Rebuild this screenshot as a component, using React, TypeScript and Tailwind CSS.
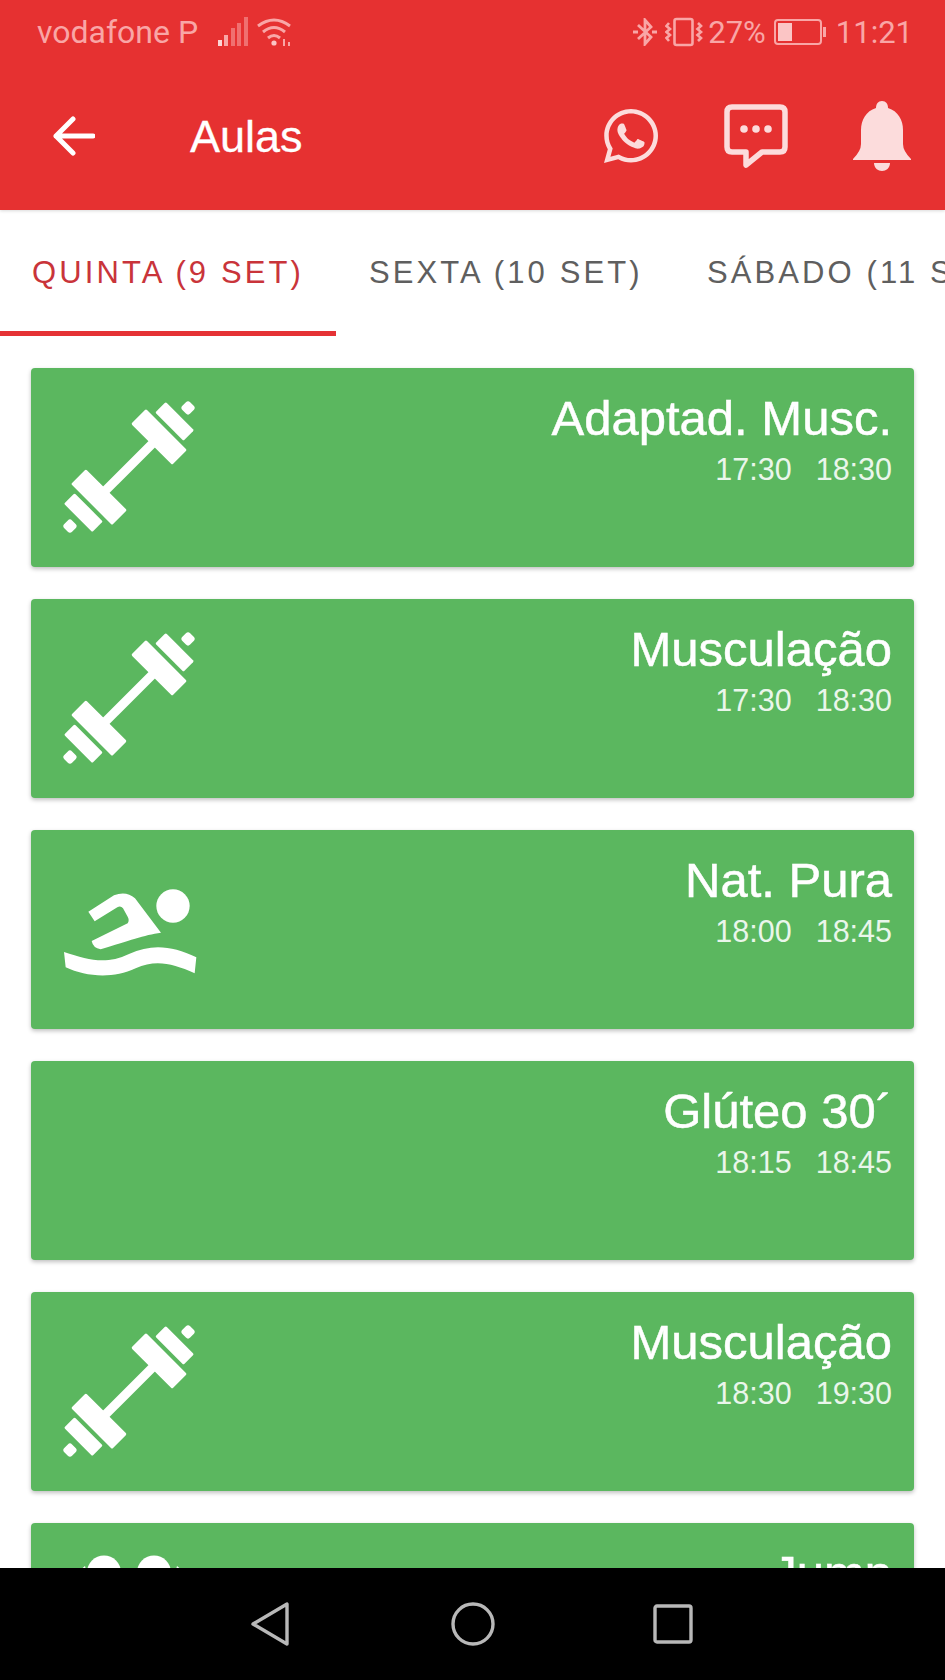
import React from 'react';
import { FaWhatsapp } from 'react-icons/fa';

interface Lesson {
    title: string;
    start: string;
    end: string;
    icon: 'gym' | 'swim' | 'jump' | null;
}

const lessons: Lesson[] = [
    { title: 'Adaptad. Musc.', start: '17:30', end: '18:30', icon: 'gym' },
    { title: 'Musculação', start: '17:30', end: '18:30', icon: 'gym' },
    { title: 'Nat. Pura', start: '18:00', end: '18:45', icon: 'swim' },
    { title: 'Glúteo 30´', start: '18:15', end: '18:45', icon: null },
    { title: 'Musculação', start: '18:30', end: '19:30', icon: 'gym' },
    { title: 'Jump', start: '18:30', end: '19:15', icon: 'jump' },
];

const GymIcon = () => (
    <svg viewBox="-70 -69 140 140" className="w-[140px] h-[140px]" fill="#fff">
        <g transform="rotate(-45)">
            <rect x="-40" y="-4.5" width="80" height="9" />
            <rect x="32" y="-29" width="21" height="58" rx="1.5" />
            <rect x="-53" y="-29" width="21" height="58" rx="1.5" />
            <rect x="57" y="-20" width="15" height="40" rx="1.5" />
            <rect x="-72" y="-20" width="15" height="40" rx="1.5" />
            <rect x="78" y="-5.5" width="11" height="11" rx="3" />
            <rect x="-89" y="-5.5" width="11" height="11" rx="3" />
        </g>
    </svg>
);

const SwimIcon = () => (
    <svg viewBox="90 0 420 420" className="w-[140px] h-[140px]" fill="#fff">
        <circle cx="432" cy="138" r="50" />
        <path d="M178 155 L255 106 Q292 92 318 115 L396 218 C345 225 300 242 215 268 Q192 264 188 243 L296 190 Q302 180 296 170 L282 145 Q275 136 265 142 L197 184 Z" />
        <path d="M105 276 C180 300 230 315 300 282 C370 250 430 258 502 292 L497 340 C430 310 380 298 320 325 C250 358 170 350 110 322 Z" />
    </svg>
);

const JumpIcon = () => (
    <svg viewBox="0 0 140 140" className="w-[140px] h-[140px]" fill="#fff">
        <circle cx="45" cy="19.5" r="17" />
        <circle cx="95" cy="19.5" r="17" />
        <path d="M20 18 L26 13 L30 30 L18 30 Z" />
        <path d="M114 30 L118 13 L124 18 L126 30 Z" />
    </svg>
);

const LessonCard = ({ lesson }: { lesson: Lesson }) => (
    <div className="relative flex h-[199px] shrink-0 items-center rounded-[4px] bg-[#5bb75f] pl-[28px] shadow-[0_2px_4px_rgba(0,0,0,0.25)]">
        {lesson.icon === 'gym' && <GymIcon />}
        {lesson.icon === 'swim' && <SwimIcon />}
        {lesson.icon === 'jump' && <JumpIcon />}
        <div className="absolute right-[22px] top-[22px] text-right">
            <div className="text-[49px] leading-[56px] text-white [-webkit-text-stroke:0.5px_white]">{lesson.title}</div>
            <div className="mt-[5px] flex justify-end gap-[24px] text-[30.5px] leading-[36px] text-[#eaf6eb]">
                <span>{lesson.start}</span>
                <span>{lesson.end}</span>
            </div>
        </div>
    </div>
);

const StatusBar = () => (
    <div className="flex h-[62px] items-center pl-[37px] pr-[32px] pt-[2px] font-['Roboto',sans-serif] text-[32px] text-[#f9a6a6]">
        <span>vodafone P</span>
        <svg viewBox="0 0 31 30" className="ml-[20px] h-[30px] w-[31px]">
            <rect x="0" y="23" width="4" height="6" fill="#fbd5d5" />
            <rect x="6" y="18" width="4" height="11" fill="#f9a6a6" />
            <rect x="13" y="11" width="4" height="18" fill="#f07070" />
            <rect x="19" y="6" width="4" height="23" fill="#f07070" />
            <rect x="26" y="0" width="4" height="29" fill="#f07070" />
        </svg>
        <svg viewBox="0 0 36 30" className="ml-[8px] h-[30px] w-[36px]" fill="none" stroke="#f9a6a6" strokeWidth="3">
            <path d="M1 9 Q17 -3 33 9" />
            <path d="M6 15 Q17 6 28 15" />
            <path d="M11 21 Q17 16 23 21" />
            <circle cx="17" cy="26" r="2.6" fill="#fbc5c5" stroke="none" />
            <path d="M27 29 V22 M32 29 V25" strokeWidth="2" />
        </svg>
        <svg viewBox="0 0 24 28" className="ml-auto h-[28px] w-[24px]" fill="none" stroke="#f9a6a6" strokeWidth="2.8">
            <path d="M5 7 L18 19 L12 26 V2 L18 9 L5 21" />
            <path d="M0 14 H5 M19 14 H24" />
        </svg>
        <svg viewBox="0 0 38 30" className="ml-[8px] h-[30px] w-[38px]" fill="none" stroke="#f9a6a6" strokeWidth="2.6">
            <rect x="9.5" y="2" width="18" height="26" rx="2" />
            <path d="M4 6 L1.5 9 L5 12 L1.5 15 L5 18 L1.5 21 L4 24" />
            <path d="M33 6 L36 9 L32.5 12 L36 15 L32.5 18 L36 21 L33 24" />
        </svg>
        <span className="ml-[5px] text-[31px] leading-none">27%</span>
        <svg viewBox="0 0 52 26" className="ml-[8px] h-[26px] w-[52px]">
            <rect x="1" y="1" width="46" height="24" rx="3" fill="none" stroke="#f9a6a6" strokeWidth="2" />
            <rect x="4" y="4" width="14" height="18" fill="#fbc5c5" />
            <rect x="49" y="8" width="3" height="10" fill="#f9a6a6" />
        </svg>
        <span className="ml-[10px] text-[31px] leading-none">11:21</span>
    </div>
);

const Toolbar = () => (
    <div className="flex h-[148px] items-center pl-[53px] pr-[34px]">
        <svg viewBox="0 0 42 40" className="h-[40px] w-[42px]" fill="none" stroke="#fff" strokeWidth="5" strokeLinecap="round" strokeLinejoin="round">
            <path d="M40 20 H3 M20 3 L3 20 L20 37" />
        </svg>
        <span className="ml-[95px] text-[45px] leading-none text-white [-webkit-text-stroke:0.3px_white]">Aulas</span>
        <FaWhatsapp className="ml-auto h-[62px] w-[54px] text-[#fcdcdc]" />
        <svg viewBox="0 0 64 64" className="ml-[66px] h-[64px] w-[64px]">
            <path d="M8 3 H56 Q61 3 61 8 V43 Q61 48 56 48 H38 L22 61 V48 H8 Q3 48 3 43 V8 Q3 3 8 3 Z" fill="none" stroke="#fcdcdc" strokeWidth="5.5" strokeLinejoin="round" />
            <circle cx="20" cy="25" r="3.8" fill="#fcdcdc" />
            <circle cx="32" cy="25" r="3.8" fill="#fcdcdc" />
            <circle cx="44" cy="25" r="3.8" fill="#fcdcdc" />
        </svg>
        <svg viewBox="0 0 58 70" className="ml-[65px] h-[70px] w-[58px]" fill="#fcdcdc">
            <path d="M29 0 C33 0 35 3 35 7 C45 10 50 19 50 29 V43 Q50 50 58 58 V59 H0 V58 Q8 50 8 43 V29 C8 19 13 10 23 7 C23 3 25 0 29 0 Z" />
            <path d="M21 62 H37 C37 67 33 70 29 70 C25 70 21 67 21 62 Z" />
        </svg>
    </div>
);

const Tabs = () => (
    <div className="flex h-[126px] shrink-0 overflow-hidden text-[31px] tracking-[3.1px] whitespace-nowrap">
        <div className="flex h-full w-[336px] shrink-0 items-center border-b-[5px] border-[#e53235] pl-[32px] pt-[6px] text-[#c9343a]">QUINTA (9 SET)</div>
        <div className="flex h-full w-[337px] shrink-0 items-center border-b-[5px] border-transparent pl-[33px] pt-[6px] text-[#5f5f5f]">SEXTA (10 SET)</div>
        <div className="flex h-full shrink-0 items-center border-b-[5px] border-transparent pl-[34px] pt-[6px] text-[#5f5f5f]">SÁBADO (11 SET)</div>
    </div>
);

const NavBar = () => (
    <div className="flex h-[112px] shrink-0 items-center bg-black">
        <svg viewBox="0 0 40 46" className="ml-[250px] h-[46px] w-[40px]" fill="none" stroke="#b8b8b8" strokeWidth="3.4" strokeLinejoin="round">
            <path d="M37 3 V43 L3 23 Z" />
        </svg>
        <svg viewBox="0 0 46 46" className="ml-[160px] h-[46px] w-[46px]" fill="none" stroke="#b8b8b8" strokeWidth="3.4">
            <circle cx="23" cy="23" r="20" />
        </svg>
        <svg viewBox="0 0 40 40" className="ml-[157px] h-[40px] w-[40px]" fill="none" stroke="#b8b8b8" strokeWidth="3.4">
            <rect x="2" y="2" width="36" height="36" rx="2" />
        </svg>
    </div>
);

const App: React.FC = () => {
    return (
        <div className="flex h-[1680px] w-[945px] flex-col overflow-hidden bg-white font-['Liberation_Sans',sans-serif]">
            <header className="relative z-10 h-[210px] shrink-0 bg-[#e63131] shadow-[0_1px_3px_rgba(0,0,0,0.15)]">
                <StatusBar />
                <Toolbar />
            </header>
            <Tabs />
            <main className="flex min-h-0 flex-1 flex-col gap-[32px] overflow-hidden px-[31px] pt-[32px]">
                {lessons.map((lesson, i) => (
                    <LessonCard key={i} lesson={lesson} />
                ))}
            </main>
            <NavBar />
        </div>
    );
};

export default App;
